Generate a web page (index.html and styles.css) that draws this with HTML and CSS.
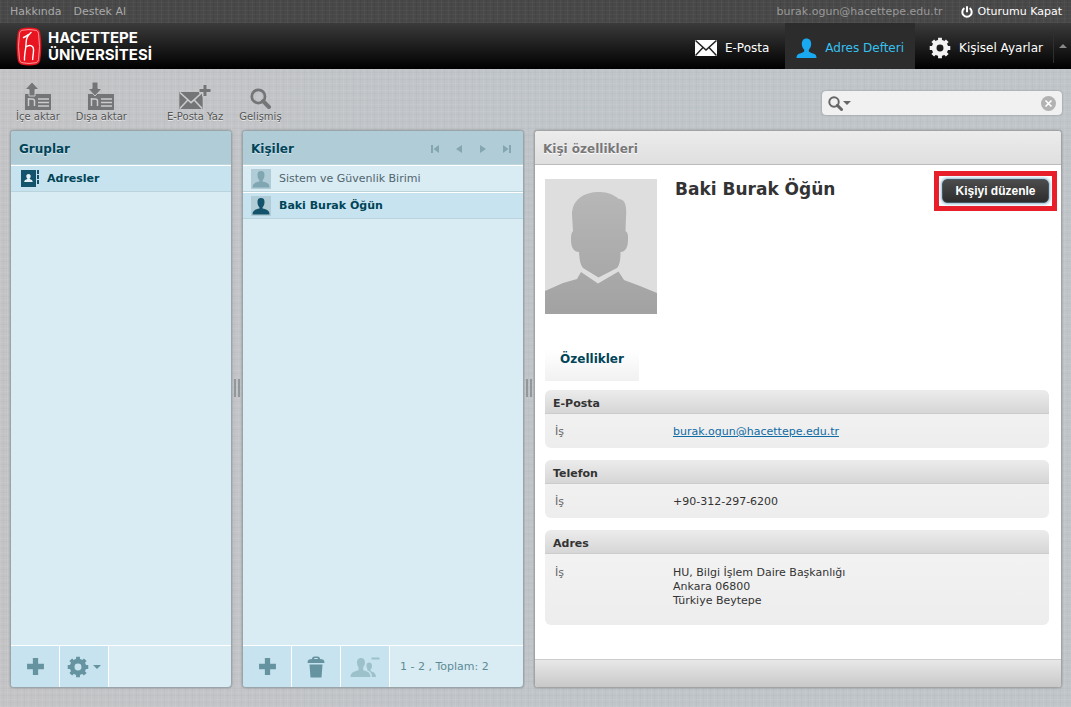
FILE: index.html
```html
<!DOCTYPE html>
<html lang="tr">
<head>
<meta charset="utf-8">
<title>Adres Defteri</title>
<meta name="viewport" content="width=device-width, initial-scale=1">
<link rel="stylesheet" href="styles.css">
</head>
<body class="page">
<svg class="sprite" aria-hidden="true">
  <symbol id="gear" viewBox="0 0 24 24">
    <g fill="none" stroke="currentColor">
      <circle cx="12" cy="12" r="6.4" stroke-width="5.200"/>
      <path stroke-width="4.2" d="M12 .8v4M12 19.200v4M.8 12h4M19.200 12h4M4.100 4.100l2.800 2.800M17.100 17.100l2.800 2.800M4.100 19.900l2.800-2.800M17.100 6.900l2.800-2.800"/>
    </g>
  </symbol>
  <symbol id="envelope" viewBox="0 0 22 16">
    <path fill="currentColor" d="M0 0h22v16H0z"/>
    <path class="fold" d="M.5.5 11 10 21.500.5M.5 15.500 8 7.500M21.500 15.500 14 7.500"/>
  </symbol>
  <symbol id="person" viewBox="0 0 20 20">
    <path fill="currentColor" d="M10 0.500c3 0 4.700 2.200 4.700 5.300 0 2.600-1 4.600-2.400 5.900v1.800c1.200 1.300 4 1.600 5.700 2.500 1.500.8 2 2 2 4H0c0-2 .5-3.200 2-4 1.700-.9 4.500-1.200 5.700-2.500v-1.800C6.300 10.400 5.300 8.400 5.300 5.800 5.300 2.700 7 .5 10 .5z"/>
  </symbol>
  <symbol id="loupe" viewBox="0 0 20 20">
    <circle cx="8" cy="8" r="6.300" fill="none" stroke="currentColor" stroke-width="2.600"/>
    <path d="M12.500 12.500 18 18" stroke="currentColor" stroke-width="4" stroke-linecap="round"/>
  </symbol>
  <symbol id="plus" viewBox="0 0 18 18">
    <path fill="currentColor" d="M6.500 1h5v5.500H17v5h-5.500V17h-5v-5.500H1v-5h5.500z"/>
  </symbol>
  <symbol id="card" viewBox="0 0 28 17">
    <path fill="currentColor" d="M1 1h26v16H1z"/>
    <path d="M4.500 5v8M4.500 6H8q2.500 0 2.500 2v5M14 6h11M14 9.500h11M14 13h11" fill="none" stroke="#c9cbcd" stroke-width="1.500"/>
  </symbol>
  <symbol id="bust" viewBox="0 0 18 18">
    <path fill="currentColor" d="M9 1c2.800 0 3.600 1.700 3.500 4 0 2.400-.7 4-1.900 5.200v1.400c2.900.6 6.900 1.300 6.900 5.900H.5c0-4.600 4-5.300 6.900-5.900v-1.400C6.200 9 5.500 7.400 5.500 5 5.400 2.700 6.200 1 9 1z"/>
  </symbol>
</svg>

<div class="topbar">
  <nav class="topbar-links"><a href="#">Hakkında</a><a href="#">Destek Al</a></nav>
  <div class="account">
    <span class="account-mail">burak.ogun@hacettepe.edu.tr</span>
    <a class="logout" href="#">
      <svg class="icon-power" viewBox="0 0 12 12"><path d="M3.400 2.200a4.700 4.700 0 1 0 5.200 0M6 .2v6" fill="none" stroke="currentColor" stroke-width="2"/></svg>
      Oturumu Kapat</a>
  </div>
</div>

<header class="header">
  <a class="brand" href="#">
    <svg class="brand-mark" viewBox="0 0 26 39">
      <path fill="#e8141f" d="M5 1.500q8-2 16 0 2.500.8 3.200 4 2.300 14 0 28-.7 3.200-3.200 4-8 2-16 0-2.500-.8-3.200-4-2.300-14 0-28 .7-3.200 3.200-4z"/>
      <path fill="none" stroke="#ffa9a9" stroke-width=".9" d="M6 3.300q7-1.500 14 0 2 .6 2.500 3 2 13.200 0 26.400-.5 2.400-2.500 3-7 1.500-14 0-2-.6-2.500-3-2-13.200 0-26.400.5-2.400 2.500-3z"/>
      <path fill="none" stroke="#fff" stroke-width="1.400" stroke-linecap="round" stroke-linejoin="round" d="M15 5.500c-2 2-4 4-4.500 7-.6 4-.5 8-1.500 13-.4 3-.7 5-.5 7.500M10 20c3-2.500 7-2 7.500 2 .2 4-.8 7-.8 10.500M7.500 10.500c2-.5 3.500-2 5-3"/>
    </svg>
    <span class="brand-name">HACETTEPE<br>ÜNİVERSİTESİ</span>
  </a>
  <nav class="nav">
    <a class="nav-item" href="#"><svg class="nav-mail"><use href="#envelope"/></svg>E-Posta</a>
    <a class="nav-item nav-active" href="#"><svg class="nav-person"><use href="#person"/></svg>Adres Defteri</a>
    <a class="nav-item nav-settings" href="#"><svg class="nav-gear"><use href="#gear"/></svg>Kişisel Ayarlar</a>
    <button class="nav-fold" type="button" aria-label="Daralt"><span class="tri-up"></span></button>
  </nav>
</header>

<div class="toolbar">
  <button class="tool" type="button">
    <svg class="tool-icon" viewBox="0 0 28 28"><use href="#card" y="11" width="28" height="17"/><path stroke="#c5c7c9" fill="currentColor" d="M8 0l7 7.500h-4V14H5V7.500H1z"/></svg>İçe aktar</button>
  <button class="tool tool-export" type="button">
    <svg class="tool-icon" viewBox="0 0 28 28"><use href="#card" y="11" width="28" height="17"/><path stroke="#c5c7c9" fill="currentColor" d="M5 0h6v6.500h4L8 14 1 6.500h4z"/></svg>Dışa aktar</button>
  <button class="tool" type="button">
    <svg class="tool-icon tool-compose" viewBox="0 0 34 28"><use href="#envelope" x="1" y="10" width="24" height="17"/><path d="M21 8.500h12M27 2.500v12" stroke="#c5c7c9" stroke-width="6"/><path d="M21.500 8.500h11M27 3v11" stroke="currentColor" stroke-width="3"/></svg>E-Posta Yaz</button>
  <button class="tool" type="button">
    <svg class="tool-icon" viewBox="0 0 28 28"><use href="#loupe" x="4" y="6" width="21" height="21"/></svg>Gelişmiş</button>
  <form class="search">
    <svg class="search-icon"><use href="#loupe"/></svg><span class="tri-down"></span>
    <input class="search-input" type="text" aria-label="Ara">
    <button class="search-clear" type="reset" aria-label="Temizle"><svg viewBox="0 0 15 15"><circle cx="7.500" cy="7.500" r="7.500" fill="#b2b2b2"/><path d="M4.500 4.500l6 6M10.500 4.500l-6 6" stroke="#fff" stroke-width="1.600"/></svg></button>
  </form>
</div>

<main class="columns">
  <section class="panel">
    <h2 class="panel-title">Gruplar</h2>
    <ul class="list">
      <li class="row row-active row-group">
        <svg class="row-book" viewBox="0 0 18 17"><path fill="#13536b" d="M0 0h15v17H0zM16 0h2v4h-2zM16 5h2v4h-2zM16 10h2v4h-2z"/><path fill="#e3f1f6" d="M7.500 4c1.700 0 2.200 1 2.200 2.200S9 8 8.600 8.800c.4.700 3 .7 3.200 3.200H3.200c.2-2.500 2.800-2.500 3.200-3.200C6 8 5.300 7.400 5.300 6.200S5.800 4 7.500 4z"/></svg>Adresler</li>
    </ul>
    <div class="panel-foot">
      <button class="foot-button" type="button" aria-label="Grup ekle"><svg class="foot-plus"><use href="#plus"/></svg></button>
      <button class="foot-button" type="button" aria-label="Grup işlemleri"><svg class="foot-gear"><use href="#gear"/></svg><span class="tri-down tri-foot"></span></button>
    </div>
  </section>
  <div class="splitter"><span class="grip"></span></div>
  <section class="panel">
    <div class="panel-title">
      <h2 class="title-text">Kişiler</h2>
      <div class="pager">
        <button type="button" aria-label="İlk sayfa"><svg viewBox="0 0 10 10"><path fill="currentColor" d="M1 1h2v8H1zM9 1v8L3.500 5z"/></svg></button>
        <button type="button" aria-label="Önceki sayfa"><svg viewBox="0 0 10 10"><path fill="currentColor" d="M8 1v8L2 5z"/></svg></button>
        <button type="button" aria-label="Sonraki sayfa"><svg viewBox="0 0 10 10"><path fill="currentColor" d="M2 1v8l6-4z"/></svg></button>
        <button type="button" aria-label="Son sayfa"><svg viewBox="0 0 10 10"><path fill="currentColor" d="M7 1h2v8H7zM1 1v8l5.500-4z"/></svg></button>
      </div>
    </div>
    <ul class="list">
      <li class="row"><svg class="row-photo"><use href="#bust"/></svg>Sistem ve Güvenlik Birimi</li>
      <li class="row row-active"><svg class="row-photo"><use href="#bust"/></svg>Baki Burak Öğün</li>
    </ul>
    <div class="panel-foot">
      <button class="foot-button" type="button" aria-label="Kişi ekle"><svg class="foot-plus"><use href="#plus"/></svg></button>
      <button class="foot-button" type="button" aria-label="Sil"><svg class="foot-trash" viewBox="0 0 18 22"><path fill="currentColor" fill-rule="evenodd" d="M5 3q0-2.500 2.500-2.500h3Q13 .5 13 3l3 .5q1.500.5 1.500 3.500H.5Q.500 4 2 3.500zM7 3h4q0-1-1-1H8Q7 2 7 3zM2.500 8.500h13L14.500 21.500h-11z"/></svg></button>
      <button class="foot-button foot-disabled" type="button" disabled aria-label="Gruptan çıkar"><svg class="foot-people" viewBox="0 0 30 22"><path fill="currentColor" d="M11 2c3 0 4 2.200 4 4.500 0 2.300-1 3.700-1.800 4.700v3c3 .8 7.300 1.600 7.300 6.800H.5c0-5.200 5-6 8-6.800v-3C7.700 10.200 7 8.800 7 6.500 7 4.200 8 2 11 2zM19 6.500c2.300 0 3 1.600 3 3.400S21 12.600 20.600 13.500v1.700c3 .8 5 1.500 5.400 5.800h-4c0-3.500-1.700-5.500-4.700-6.700v-2c-1-1-.8-1.500-.8-2.900 0-1.800.8-2.900 2.500-2.900zM21.500 1.500h8v2h-8z"/></svg></button>
      <span class="count">1 - 2 , Toplam: 2</span>
    </div>
  </section>
  <div class="splitter"><span class="grip"></span></div>
  <section class="panel panel-detail">
    <h2 class="panel-title">Kişi özellikleri</h2>
    <div class="detail">
      <div class="profile">
        <svg class="photo" viewBox="0 0 112 135" role="img" aria-label="Fotoğraf">
          <defs><linearGradient id="shade" x1="0" y1="13" x2="0" y2="135" gradientUnits="userSpaceOnUse"><stop offset="0" stop-color="#b7b7b7"/><stop offset="1" stop-color="#a2a2a2"/></linearGradient></defs>
          <path fill="#dedede" d="M0 0h112v135H0z"/>
          <path fill="url(#shade)" d="M55 13c8 0 14 3 19 7 6 0 8 7 7 18l-.5 14c3 2 2.500 5 2.500 9 0 6-2 12-7.500 12 0 9-1 13-3.500 16L53.500 98.500 38 89c-3-4-3.500-9-4-16C28 73 26 67 26 61c0-4 0-7 2-9l-1-16C27 21 38 13 55 13z"/>
          <path fill="url(#shade)" d="M36 93l17 11.500L73.500 92.500 79 101l16 6 17 7v21H0v-23l18-8 14-4z"/>
        </svg>
        <h1 class="name">Baki Burak Öğün</h1>
        <div class="callout"><button class="edit" type="button">Kişiyi düzenle</button></div>
      </div>
      <div class="tabs"><button class="tab" type="button">Özellikler</button></div>
      <div class="fields">
        <section class="field"><h3 class="field-title">E-Posta</h3><dl class="field-body"><dt>İş</dt><dd><a href="#">burak.ogun@hacettepe.edu.tr</a></dd></dl></section>
        <section class="field"><h3 class="field-title">Telefon</h3><dl class="field-body"><dt>İş</dt><dd>+90-312-297-6200</dd></dl></section>
        <section class="field field-address"><h3 class="field-title">Adres</h3><dl class="field-body"><dt>İş</dt><dd>HU, Bilgi İşlem Daire Başkanlığı<br>Ankara 06800<br>Türkiye Beytepe</dd></dl></section>
      </div>
    </div>
    <div class="detail-foot"></div>
  </section>
</main>
</body>
</html>
```
FILE: styles.css
```css
* { box-sizing: border-box; }

.page {
  margin: 0;
  min-height: 100vh;
  display: flex;
  flex-direction: column;
  font: 11px/14px Verdana, "DejaVu Sans", sans-serif;
  color: #333;
  background:
    repeating-linear-gradient(90deg, rgba(255,255,255,.06) 0 1px, transparent 1px 3px, rgba(70,80,90,.03) 3px 4px, transparent 4px 7px),
    repeating-linear-gradient(0deg, rgba(255,255,255,.06) 0 1px, transparent 1px 4px, rgba(70,80,90,.03) 4px 5px, transparent 5px 7px),
    linear-gradient(90deg, #c4c4c6, #c0c5c9 50%, #c0c5c9);
}

button { font: inherit; color: inherit; background: none; border: 0; padding: 0; margin: 0; cursor: pointer; }
a { color: inherit; text-decoration: none; }
h1, h2, h3, ul, dl, dd { margin: 0; padding: 0; }
.sprite { display: none; }
.fold { fill: none; stroke: var(--fold, #222); stroke-width: 1.5; }

.topbar {
  height: 23px;
  flex: none;
  display: flex;
  align-items: center;
  justify-content: space-between;
  padding: 0 9px 0 10px;
  color: #aaa;
  background:
    repeating-linear-gradient(90deg, rgba(255,255,255,.03) 0 1px, transparent 1px 3px, rgba(0,0,0,.05) 3px 4px, transparent 4px 7px),
    repeating-linear-gradient(0deg, rgba(255,255,255,.03) 0 1px, transparent 1px 4px),
    #484848;
}
.topbar-links { display: flex; gap: 12px; }
.account { display: flex; gap: 18px; }
.account-mail { color: #999; }
.logout { display: flex; align-items: center; gap: 5px; color: #fff; }
.icon-power { width: 12px; height: 12px; }

.header {
  height: 46px;
  flex: none;
  display: flex;
  justify-content: space-between;
  background: linear-gradient(#3b3b3b, #000);
}
.brand { display: flex; align-items: center; gap: 6px; padding-left: 16px; color: #fff; }
.brand-mark { width: 26px; height: 39px; }
.brand-name { font: 700 15px/17px Inter, sans-serif; }
.nav { display: flex; color: #fff; font-size: 12px; }
.nav-item { display: flex; align-items: center; gap: 8px; padding: 3px 16px 0 14px; }
.nav-active { padding: 3px 11px 0; color: #35c1f1; background: #2c2c2c; }
.nav-settings { padding: 3px 10px 0 14px; }
.nav-mail { width: 22px; height: 16px; }
.nav-person { width: 21px; height: 20px; color: #19a9f0; }
.nav-gear { width: 22px; height: 22px; color: #f2f2f2; }
.nav-fold { width: 18px; margin: 6px 0; border-left: 1px solid #2f2f2f; display: flex; align-items: center; justify-content: center; }
.tri-up { border: 4px solid transparent; border-top: 0; border-bottom-color: #888; }
.tri-down { border: 4px solid transparent; border-bottom: 0; border-top-color: #666; }

.toolbar {
  height: 61px;
  flex: none;
  display: flex;
  align-items: flex-start;
  gap: 16px;
  padding: 13px 9px 0 16px;
}
.tool { display: flex; flex-direction: column; align-items: center; font-size: 10px; line-height: 14px; color: #555; text-shadow: 0 1px 0 #e6e6e6; }
.tool-export { margin-right: 24px; }
.tool-icon { width: 28px; height: 28px; color: #747577; }
.tool-compose { width: 34px; --fold: #c9cbcd; }
.search {
  margin: 9px 0 0 auto;
  width: 240px;
  height: 24px;
  display: flex;
  align-items: center;
  padding: 0 6px;
  background: #f1f1f1;
  border-radius: 4px;
  box-shadow: 0 0 2px #7d8285;
}
.search-icon { width: 15px; height: 15px; color: #666; }
.search-input { flex: 1; min-width: 0; height: 22px; margin: 0 6px; padding: 0; border: 0; outline: 0; background: none; font: inherit; }
.search-clear { width: 15px; height: 15px; display: flex; }

.columns {
  flex: 1;
  display: grid;
  grid-template-columns: 222px 10px 282px 10px minmax(0, 1fr);
  padding: 0 9px 19px 10px;
}
.panel {
  display: flex;
  flex-direction: column;
  overflow: hidden;
  border: 1px solid #9aa5aa;
  border-radius: 4px;
  background: #d9ebf3;
  box-shadow: 0 0 2px #868b8e;
  min-width: 0;
}
.panel-title {
  height: 34px;
  flex: none;
  display: flex;
  align-items: center;
  justify-content: space-between;
  padding: 2px 8px 0;
  font-size: 12px;
  color: #004458;
  text-shadow: 0 1px 1px #d8e8ee;
  background: #b0ccd7;
  border-bottom: 1px solid #bfd5de;
}
.title-text { font-size: 12px; }
.pager { display: flex; gap: 14px; color: #84a6b1; padding-right: 3px; }
.pager svg { display: block; width: 10px; height: 10px; }
.list { flex: 1; list-style: none; }
.row {
  height: 27px;
  display: flex;
  align-items: center;
  gap: 8px;
  padding: 0 8px;
  line-height: 16px;
  color: #50666e;
  border-top: 1px solid #fff;
  border-bottom: 1px solid #bbd3da;
}
.row-active { font-weight: 700; color: #004458; background: #c7e3ef; }
.row-group { padding-left: 10px; }
.row-book { width: 18px; height: 17px; }
.row-photo { width: 20px; height: 20px; padding: 1px; background: #b0ccd6; color: #80a6b2; }
.row-active .row-photo { color: #13536b; }
.panel-foot { height: 42px; flex: none; display: flex; border-top: 1px solid #fff; color: #5c8b96; }
.foot-button { width: 49px; display: flex; align-items: center; justify-content: center; gap: 4px; background: #c7e3ef; border-right: 1px solid #fff; color: #6693a0; }
.foot-disabled { color: #9dc1cb; }
.foot-plus { width: 19px; height: 19px; }
.foot-gear { width: 22px; height: 22px; }
.foot-trash { width: 18px; height: 22px; }
.foot-people { width: 30px; height: 22px; }
.tri-foot { border-top-color: #6693a0; }
.count { align-self: center; padding-left: 10px; }

.splitter { display: flex; justify-content: center; padding-top: 249px; }
.grip { width: 6px; height: 18px; border: solid #92979a; border-width: 0 2px; }

.panel-detail { background: #fff; border-color: #a3a3a3; }
.panel-detail .panel-title { color: #777; background: linear-gradient(#ececec, #dfdfdf); border-color: #bbb; text-shadow: 0 1px 1px #fff; }
.detail { flex: 1; }
.profile { display: flex; align-items: flex-start; padding: 6px 4px 0 10px; }
.photo { width: 112px; height: 135px; margin-top: 8px; flex: none; }
.name { flex: 1; margin: 8px 0 0 18px; font-size: 17px; line-height: 20px; color: #333; }
.callout { border: 5px solid #e81f2a; padding: 3px; background: #fff; }
.edit {
  height: 24px;
  width: 107px;
  font: 700 12px/22px "Liberation Sans", Arial, sans-serif;
  color: #fff;
  background: linear-gradient(#4c4c4c, #2d2d2d);
  border: 1px solid #465864;
  border-radius: 5px;
  box-shadow: 0 0 3px 1px #8db9d2;
}
.tabs { padding: 36px 10px 0; }
.tab {
  width: 94px;
  height: 31px;
  padding-bottom: 14px;
  font-size: 12px;
  font-weight: 700;
  color: #004458;
  background: linear-gradient(#fff, #f1f1f1);
}
.fields { display: flex; flex-direction: column; gap: 12px; padding: 9px 12px 0 10px; }
.field { border-radius: 6px; overflow: hidden; background: linear-gradient(#f4f4f4, #ededed); }
.field-title { height: 24px; padding: 0 8px; font-size: 11px; line-height: 28px; background: linear-gradient(#ececec, #d6d6d6); border-bottom: 1px solid #ccc; }
.field-body { display: flex; padding: 11px 10px 9px; }
.field-body dt { width: 118px; flex: none; color: #666; }
.field-body a { color: #0f6ba3; text-decoration: underline; }
.field-address .field-body { padding: 12px 10px 17px; }
.detail-foot { height: 28px; flex: none; background: linear-gradient(#e8e8e8, #c8c8c8); border-top: 1px solid #ccc; }
```
